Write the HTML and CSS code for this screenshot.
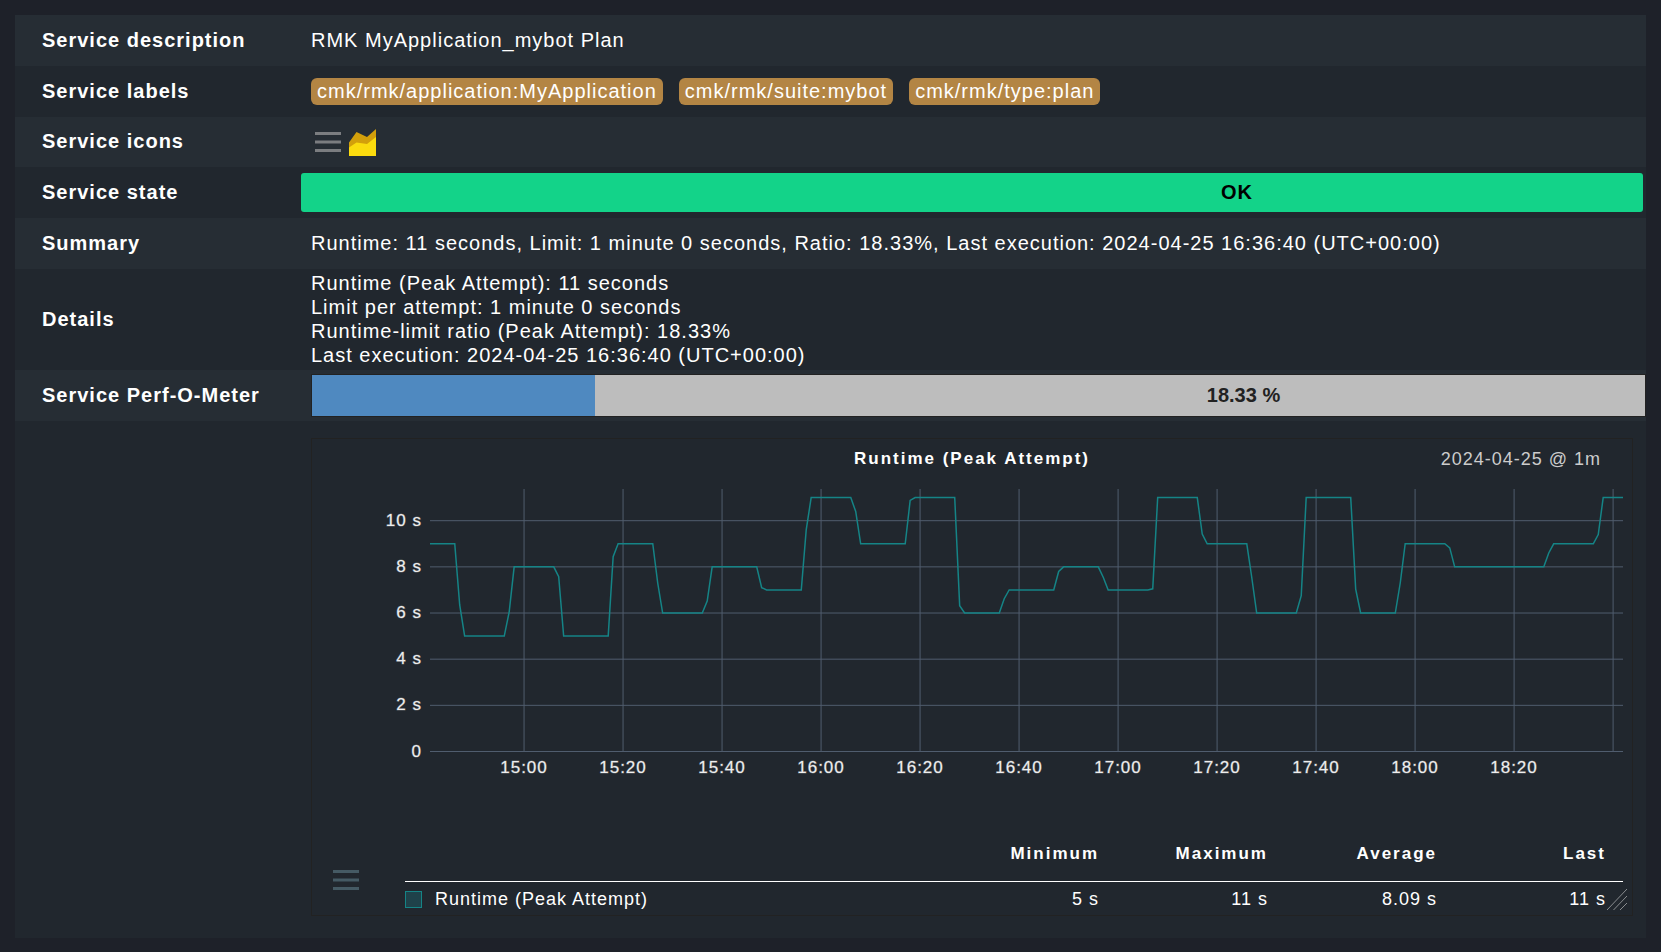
FILE: index.html
```html
<!DOCTYPE html>
<html lang="en">
<head>
  <meta charset="UTF-8">
  <meta name="viewport" content="width=device-width, initial-scale=1.0">
  <title>RMK MyApplication_mybot Plan</title>
  <link rel="stylesheet" href="styles.css">
</head>
<body>
  <main>
    <table class="service">
      <tr>
        <th scope="row">Service description</th>
        <td>RMK MyApplication_mybot Plan</td>
      </tr>
      <tr>
        <th scope="row">Service labels</th>
        <td class="flush">
          <div class="labels">
            <a href="#">cmk/rmk/application:MyApplication</a>
            <a href="#">cmk/rmk/suite:mybot</a>
            <a href="#">cmk/rmk/type:plan</a>
          </div>
        </td>
      </tr>
      <tr class="icons-row">
        <th scope="row">Service icons</th>
        <td class="flush">
          <div class="icons">
            <button class="menu" aria-label="Action menu">
              <svg width="26" height="20" viewBox="0 0 26 20"><path d="M0 0h26v3H0zM0 8.5h26v3H0zM0 17h26v3H0z"/></svg>
            </button>
            <a href="#" aria-label="Service graphs">
              <svg width="27" height="27" viewBox="0 0 27 27">
                <path fill="#d29f0b" d="M0 13.5L7.5 3L18 8L27 0V27H0z"/>
                <path fill="#fbdb0e" d="M0 18.5L7.5 13.5L18 15L27 8V27H0z"/>
              </svg>
            </a>
          </div>
        </td>
      </tr>
      <tr>
        <th scope="row">Service state</th>
        <td class="state-cell"><div class="state">OK</div></td>
      </tr>
      <tr>
        <th scope="row">Summary</th>
        <td>Runtime: 11 seconds, Limit: 1 minute 0 seconds, Ratio: 18.33%, Last execution: 2024-04-25 16:36:40 (UTC+00:00)</td>
      </tr>
      <tr class="details-row">
        <th scope="row">Details</th>
        <td>Runtime (Peak Attempt): 11 seconds<br>Limit per attempt: 1 minute 0 seconds<br>Runtime-limit ratio (Peak Attempt): 18.33%<br>Last execution: 2024-04-25 16:36:40 (UTC+00:00)</td>
      </tr>
      <tr>
        <th scope="row">Service Perf-O-Meter</th>
        <td class="perf-cell">
          <div class="perfometer">
            <div class="perf-bar" style="width: 21.2%"></div>
            <div class="perf-text">18.33 %</div>
          </div>
        </td>
      </tr>
      <tr>
        <th></th>
        <td class="graph-cell">
          <section class="graph">
            <header>
              <h2>Runtime (Peak Attempt)</h2>
              <span class="range">2024-04-25 @ 1m</span>
            </header>
            <svg class="plot" viewBox="0 0 1320 300" role="img" aria-label="Runtime (Peak Attempt)">
              <g id="grid" class="grid"></g>
              <g id="y-labels" class="y-labels"></g>
              <g id="x-labels" class="x-labels"></g>
              <path id="curve" class="curve"/>
            </svg>
            <div class="legend">
              <button class="menu" aria-label="Graph menu">
                <svg width="26" height="20" viewBox="0 0 26 20"><path d="M0 0h26v3H0zM0 8.5h26v3H0zM0 17h26v3H0z"/></svg>
              </button>
              <table>
                <thead>
                  <tr><th></th><th>Minimum</th><th>Maximum</th><th>Average</th><th>Last</th></tr>
                </thead>
                <tbody>
                  <tr>
                    <td><div class="metric"><span class="swatch"></span>Runtime (Peak Attempt)</div></td>
                    <td>5 s</td><td>11 s</td><td>8.09 s</td><td>11 s</td>
                  </tr>
                </tbody>
              </table>
            </div>
            <svg class="resize" width="20" height="21" viewBox="0 0 20 21"><path d="M0 21L20 0M6.5 21L20 7M13 21L20 14"/></svg>
          </section>
        </td>
      </tr>
    </table>
  </main>
  <script src="graph.js"></script>
</body>
</html>
```
FILE: graph.js
```js
// minutes relative to 15:00, runtime in seconds
const points = [
  [-19, 9], [-14, 9], [-13, 6.35], [-12, 5], [-4, 5], [-3, 6.05], [-2, 8],
  [6, 8], [7, 7.57], [8, 5], [17, 5], [18, 8.44], [19, 9], [26, 9], [27, 7.3],
  [28, 6], [36, 6], [37, 6.52], [38, 8], [47, 8], [48, 7.1], [49, 7], [56, 7],
  [57, 9.6], [58, 11], [66, 11], [67, 10.4], [68, 9], [77, 9], [78, 10.88],
  [79, 11], [87, 11], [88, 6.32], [89, 6], [96, 6], [97, 6.62], [98, 7],
  [107, 7], [108, 7.8], [109, 8], [116, 8], [117, 7.55], [118, 7], [126, 7],
  [127, 7.05], [128, 11], [136, 11], [137, 9.42], [138, 9], [146, 9],
  [147, 7.55], [148, 6], [156, 6], [157, 6.75], [158, 11], [167, 11],
  [168, 7.03], [169, 6], [176, 6], [177, 7.3], [178, 9], [186, 9],
  [187, 8.82], [188, 8], [206, 8], [207, 8.6], [208, 9], [216, 9],
  [217, 9.4], [218, 11], [222, 11]
];

const plotLeft = 118;
const plotRight = 1311;
const plotTop = 10;
const plotBottom = 272.5;

const x = minute => plotLeft + (minute + 19) * (plotRight - plotLeft) / 241;
const y = seconds => plotBottom - seconds * 23.08;

function add(parent, name, attributes, text) {
  const node = document.createElementNS("http://www.w3.org/2000/svg", name);
  for (const key in attributes) {
    node.setAttribute(key, attributes[key]);
  }
  if (text) {
    node.textContent = text;
  }
  document.getElementById(parent).appendChild(node);
}

for (let s = 0; s <= 10; s += 2) {
  add("grid", "line", { x1: plotLeft, x2: plotRight, y1: y(s), y2: y(s) });
  add("y-labels", "text", { x: 110, y: Math.round(y(s) + 5) }, s === 0 ? "0" : s + " s");
}

for (let m = 0; m <= 220; m += 20) {
  add("grid", "line", { x1: x(m), x2: x(m), y1: plotTop, y2: plotBottom });
  if (m < 220) {
    const hour = 15 + Math.floor(m / 60);
    const label = hour + ":" + String(m % 60).padStart(2, "0");
    add("x-labels", "text", { x: Math.round(x(m)), y: 294 }, label);
  }
}

document.getElementById("curve").setAttribute("d", "M" + points.map(p => x(p[0]) + " " + y(p[1])).join("L"));
```
FILE: styles.css
```css
body {
  margin: 15px;
  background-color: #1e2129;
  color: #fff;
  font-family: "Liberation Sans", Arial, sans-serif;
  font-size: 20px;
  line-height: 24px;
  letter-spacing: 1px;
}
a {
  color: inherit;
  text-decoration: none;
}
button {
  padding: 0;
  border: none;
  background: none;
  cursor: pointer;
}
svg {
  display: block;
}
table {
  width: 100%;
  border-collapse: collapse;
  table-layout: fixed;
}

/* Service properties */
.service > tbody > tr {
  height: 51px;
  background-color: #21272e;
}
.service > tbody > tr:nth-child(odd) {
  background-color: #262d34;
}
.service > tbody > tr:last-child {
  background-color: #21272e;
}
.service > tbody > .icons-row {
  height: 50px;
}
.service > tbody > .details-row {
  height: 101px;
}
.service > tbody > tr > th {
  width: 259px;
  padding: 0 0 2px 27px;
  text-align: left;
}
.service > tbody > tr > td {
  padding: 0 10px 2px;
}
.service > tbody > tr > .flush {
  padding-bottom: 0;
}
.labels {
  display: flex;
  gap: 16px;
}
.labels a {
  padding: 1px 6px 2px;
  border-radius: 6px;
  background-color: #b38544;
}
.icons {
  display: flex;
  align-items: center;
  gap: 8px;
  padding-left: 4px;
}
.menu {
  fill: #7b7d80;
}
.service > tbody > tr > .state-cell {
  padding: 0 3px 0 0;
}
.state {
  padding: 7px 0 8px 530px;
  border-radius: 3px;
  background-color: #13d389;
  color: #000;
  font-weight: bold;
  text-align: center;
}
.service > tbody > tr > .perf-cell {
  padding: 0 0 0 10px;
}
.perfometer {
  display: grid;
  border: 1px solid #222;
  background-color: #bdbdbd;
}
.perf-bar,
.perf-text {
  grid-area: 1 / 1;
}
.perf-bar {
  background-color: #4f89c0;
}
.perf-text {
  padding: 8px 0 9px 530px;
  color: #222;
  font-weight: bold;
  letter-spacing: 0;
  text-align: center;
}

/* Graph */
.service > tbody > tr > .graph-cell {
  padding: 17px 13px 22px 10px;
}
.graph {
  position: relative;
  border: 1px solid #222;
  font-size: 18px;
}
.graph header {
  display: grid;
  grid-template-columns: 1fr auto 1fr;
  padding: 8px 31px 8px;
}
.graph h2 {
  grid-column: 2;
  margin: 0;
  font-size: 17px;
  letter-spacing: 2px;
}
.range {
  color: #ccc;
  text-align: right;
}
.plot {
  width: 100%;
}
.plot text {
  fill: #eee;
  stroke: #eee;
  stroke-opacity: 0.3;
  font-size: 17px;
}
.grid {
  stroke: #505d6e;
}
.y-labels {
  text-anchor: end;
}
.x-labels {
  text-anchor: middle;
}
.curve {
  fill: none;
  stroke: #158486;
  stroke-width: 1.5;
}
.legend {
  display: flex;
  align-items: flex-end;
  gap: 46px;
  padding: 63px 9px 4px 21px;
}
.legend .menu {
  padding-bottom: 21px;
  fill: #455a64;
}
.legend th,
.legend td {
  box-sizing: border-box;
  width: 169px;
  padding: 0 17px 0 0;
  text-align: right;
}
.legend th {
  padding-bottom: 15px;
  border-bottom: 1px solid #fff;
  font-size: 17px;
  letter-spacing: 2px;
}
.legend td {
  padding-top: 5px;
}
.legend th:first-child,
.legend td:first-child {
  width: auto;
  text-align: left;
}
.metric {
  display: flex;
  align-items: center;
  gap: 13px;
}
.swatch {
  width: 15px;
  height: 15px;
  border: 1px solid #158486;
  background-color: #1f424a;
}
.resize {
  position: absolute;
  right: 5px;
  bottom: 5px;
  stroke: #8a8d90;
}
```
